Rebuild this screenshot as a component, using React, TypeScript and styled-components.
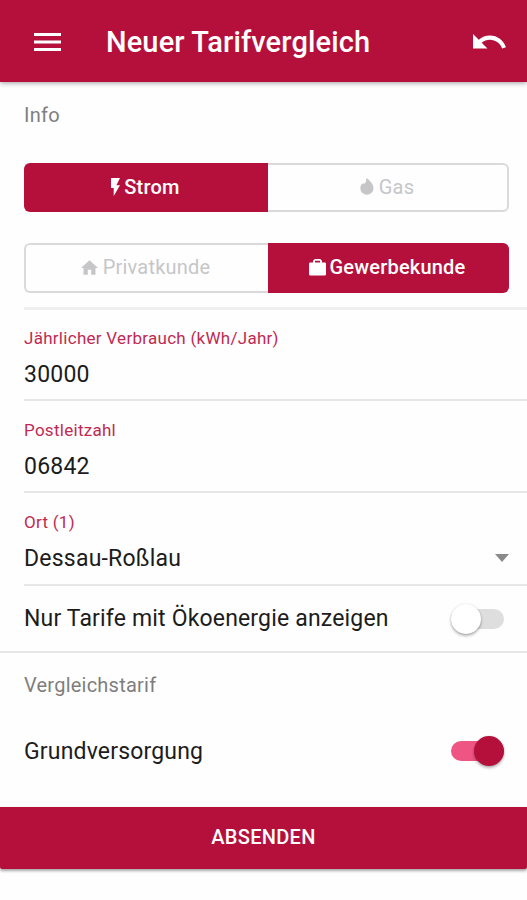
import React from 'react';
import styled, { createGlobalStyle, css } from 'styled-components';

const BRAND = '#b5103c';

const GlobalStyle = createGlobalStyle`
  * { box-sizing: border-box; }
  body { margin: 0; background: #fefefe; font-family: Roboto, "Liberation Sans", sans-serif; overflow: hidden; }
`;

const Page = styled.main`
  width: 527px;
  height: 900px;
  display: flex;
  flex-direction: column;
  background: #fefefe;
  overflow: hidden;
`;

const Header = styled.header`
  height: 82px;
  flex: none;
  display: flex;
  align-items: center;
  padding: 1px 21px 0 34px;
  background: ${BRAND};
  color: #fff;
  box-shadow: 0 1px 5px rgba(0, 0, 0, 0.38);
`;

const Title = styled.h1`
  flex: 1;
  margin: 0 0 0 45px;
  font-size: 29px;
  line-height: 40px;
  font-weight: 500;
  letter-spacing: 0.13px;
  white-space: nowrap;
`;

const IconButton = styled.button`
  display: flex;
  padding: 0;
  border: 0;
  background: none;
  color: inherit;
`;

const SectionLabel = styled.h2<{ $height: number }>`
  flex: none;
  margin: 0;
  padding-left: 24px;
  height: ${(p) => p.$height}px;
  line-height: ${(p) => p.$height}px;
  font-size: 20px;
  font-weight: 400;
  letter-spacing: 0.23px;
  color: #7e7e7e;
`;

const SegmentGroups = styled.div`
  display: grid;
  grid-template-rows: 49px 50px;
  gap: 31px;
  padding: 15px 18px 14px 24px;
`;

const Segments = styled.div`
  display: grid;
  grid-template-columns: 244px 241px;
`;

const Segment = styled.button<{ $active?: boolean }>`
  display: flex;
  align-items: center;
  justify-content: center;
  gap: 5px;
  padding: 0 0 2px;
  border: 2px solid #dadadc;
  background: transparent;
  color: #c6c6c9;
  font: 400 20px Roboto, "Liberation Sans", sans-serif;
  letter-spacing: 0.2px;
  &:first-child { border-radius: 6px 0 0 6px; border-right: 0; padding-right: 3px; }
  &:last-child { border-radius: 0 6px 6px 0; border-left: 0; padding-right: 1px; }
  ${(p) =>
    p.$active &&
    css`
      gap: 4px;
      border-color: ${BRAND};
      background: ${BRAND};
      color: #fff;
      font-weight: 500;
    `}
`;

const Divider = styled.hr`
  flex: none;
  height: 3px;
  margin: 0 0 0 24px;
  border: 0;
  background: #efefef;
`;

const Fields = styled.div`
  display: grid;
  grid-template-rows: 91px 92px 93px;
  padding-left: 24px;
`;

const Field = styled.label`
  display: flex;
  flex-direction: column;
  padding-top: 17px;
  border-bottom: 2px solid #e6e6e6;
  &:first-child { padding-top: 16px; }
`;

const FieldLabel = styled.span`
  font-size: 17px;
  line-height: 24px;
  letter-spacing: 0.28px;
  color: #c02a52;
`;

const FieldValue = styled.span`
  display: flex;
  align-items: center;
  justify-content: space-between;
  padding-right: 18px;
  margin-top: 10px;
  font-size: 23px;
  line-height: 30px;
  letter-spacing: 0.22px;
  color: #1c1c1c;
  svg { margin-top: -2px; }
`;

const ToggleRow = styled.div<{ $height: number; $line?: boolean }>`
  flex: none;
  display: flex;
  align-items: center;
  justify-content: space-between;
  height: ${(p) => p.$height}px;
  padding: 0 23px 0 24px;
  border-bottom: ${(p) => (p.$line ? '2px solid #e6e6e6' : '0')};
  font-size: 23px;
  letter-spacing: 0.17px;
  color: #1c1c1c;
`;

const Track = styled.span<{ $on?: boolean }>`
  display: flex;
  align-items: center;
  justify-content: ${(p) => (p.$on ? 'flex-end' : 'flex-start')};
  width: 53px;
  height: 20px;
  border-radius: 10px;
  background: ${(p) => (p.$on ? '#ee5583' : '#dedede')};
`;

const Knob = styled.span<{ $on?: boolean }>`
  width: 30px;
  height: 30px;
  flex: none;
  border-radius: 50%;
  background: ${(p) => (p.$on ? BRAND : '#fff')};
  box-shadow: 0 2px 3px rgba(0, 0, 0, 0.3), 0 0 2px rgba(0, 0, 0, 0.12);
`;

const Submit = styled.button`
  height: 62px;
  flex: none;
  margin-top: 22px;
  padding: 0 0 3px;
  border: 0;
  border-radius: 0 0 2px 2px;
  background: ${BRAND};
  color: #fff;
  font: 500 20px Roboto, "Liberation Sans", sans-serif;
  letter-spacing: 0.3px;
  box-shadow: 0 2px 3px rgba(0, 0, 0, 0.35);
`;

const MenuIcon = () => (
  <svg width="27" height="18" viewBox="0 0 18 12" fill="currentColor">
    <path d="M0 0h18v2H0zM0 5h18v2H0zM0 10h18v2H0z" />
  </svg>
);

const UndoIcon = () => (
  <svg width="33" height="14.5" viewBox="2 7 20.5 9" fill="currentColor">
    <path d="M12.5 8c-2.65 0-5.05.99-6.9 2.6L2 7v9h9l-3.62-3.62c1.39-1.16 3.16-1.88 5.12-1.88 3.54 0 6.55 2.31 7.6 5.5l2.37-.78C21.08 11.03 17.15 8 12.5 8z" />
  </svg>
);

const FlashIcon = () => (
  <svg width="9" height="18" viewBox="7 2 10 20" fill="currentColor">
    <path d="M7 2v11h3v9l7-12h-4l4-8z" />
  </svg>
);

const DropIcon = () => (
  <svg width="14" height="17" viewBox="0 0 14 17" fill="currentColor">
    <path d="M6 0C9.600 2 13.500 6 13.500 10.200A6.600 6.600 0 0 1 .3 10.200C.3 8 1.300 6.300 3 5.200L4.300 5.800C6 4.500 6.600 2.500 6 0z" />
  </svg>
);

const HomeIcon = () => (
  <svg width="17" height="15" viewBox="2 3 20 17" fill="currentColor">
    <path d="M10 20v-6h4v6h5v-8h3L12 3 2 12h3v8z" />
  </svg>
);

const CaseIcon = () => (
  <svg width="17" height="17" viewBox="0 0 17 17" fill="currentColor">
    <path
      fillRule="evenodd"
      d="M5.800 0h5.400L13 1.800V3.500h2.700A1.300 1.300 0 0 1 17 4.800v10.400a1.300 1.300 0 0 1-1.300 1.300H1.300A1.300 1.300 0 0 1 0 15.200V4.800A1.300 1.300 0 0 1 1.300 3.500H4V1.800zM6 1.800V3.500h5V1.800z"
    />
  </svg>
);

const CaretIcon = () => (
  <svg width="14" height="8" viewBox="0 0 14 8" fill="#8a8a8a">
    <path d="M0 0h14L7 8z" />
  </svg>
);

export default function App() {
  return (
    <>
      <GlobalStyle />
      <Page>
        <Header>
          <IconButton aria-label="Menü"><MenuIcon /></IconButton>
          <Title>Neuer Tarifvergleich</Title>
          <IconButton aria-label="Zurücksetzen"><UndoIcon /></IconButton>
        </Header>
        <SectionLabel $height={66}>Info</SectionLabel>
        <SegmentGroups>
          <Segments>
            <Segment $active><FlashIcon />Strom</Segment>
            <Segment><DropIcon />Gas</Segment>
          </Segments>
          <Segments>
            <Segment><HomeIcon />Privatkunde</Segment>
            <Segment $active><CaseIcon />Gewerbekunde</Segment>
          </Segments>
        </SegmentGroups>
        <Divider />
        <Fields>
          <Field>
            <FieldLabel>Jährlicher Verbrauch (kWh/Jahr)</FieldLabel>
            <FieldValue>30000</FieldValue>
          </Field>
          <Field>
            <FieldLabel>Postleitzahl</FieldLabel>
            <FieldValue>06842</FieldValue>
          </Field>
          <Field>
            <FieldLabel>Ort (1)</FieldLabel>
            <FieldValue>Dessau-Roßlau<CaretIcon /></FieldValue>
          </Field>
        </Fields>
        <ToggleRow $height={67} $line>
          Nur Tarife mit Ökoenergie anzeigen
          <Track><Knob /></Track>
        </ToggleRow>
        <SectionLabel $height={64}>Vergleichstarif</SectionLabel>
        <ToggleRow $height={68}>
          Grundversorgung
          <Track $on><Knob $on /></Track>
        </ToggleRow>
        <Submit>ABSENDEN</Submit>
      </Page>
    </>
  );
}
